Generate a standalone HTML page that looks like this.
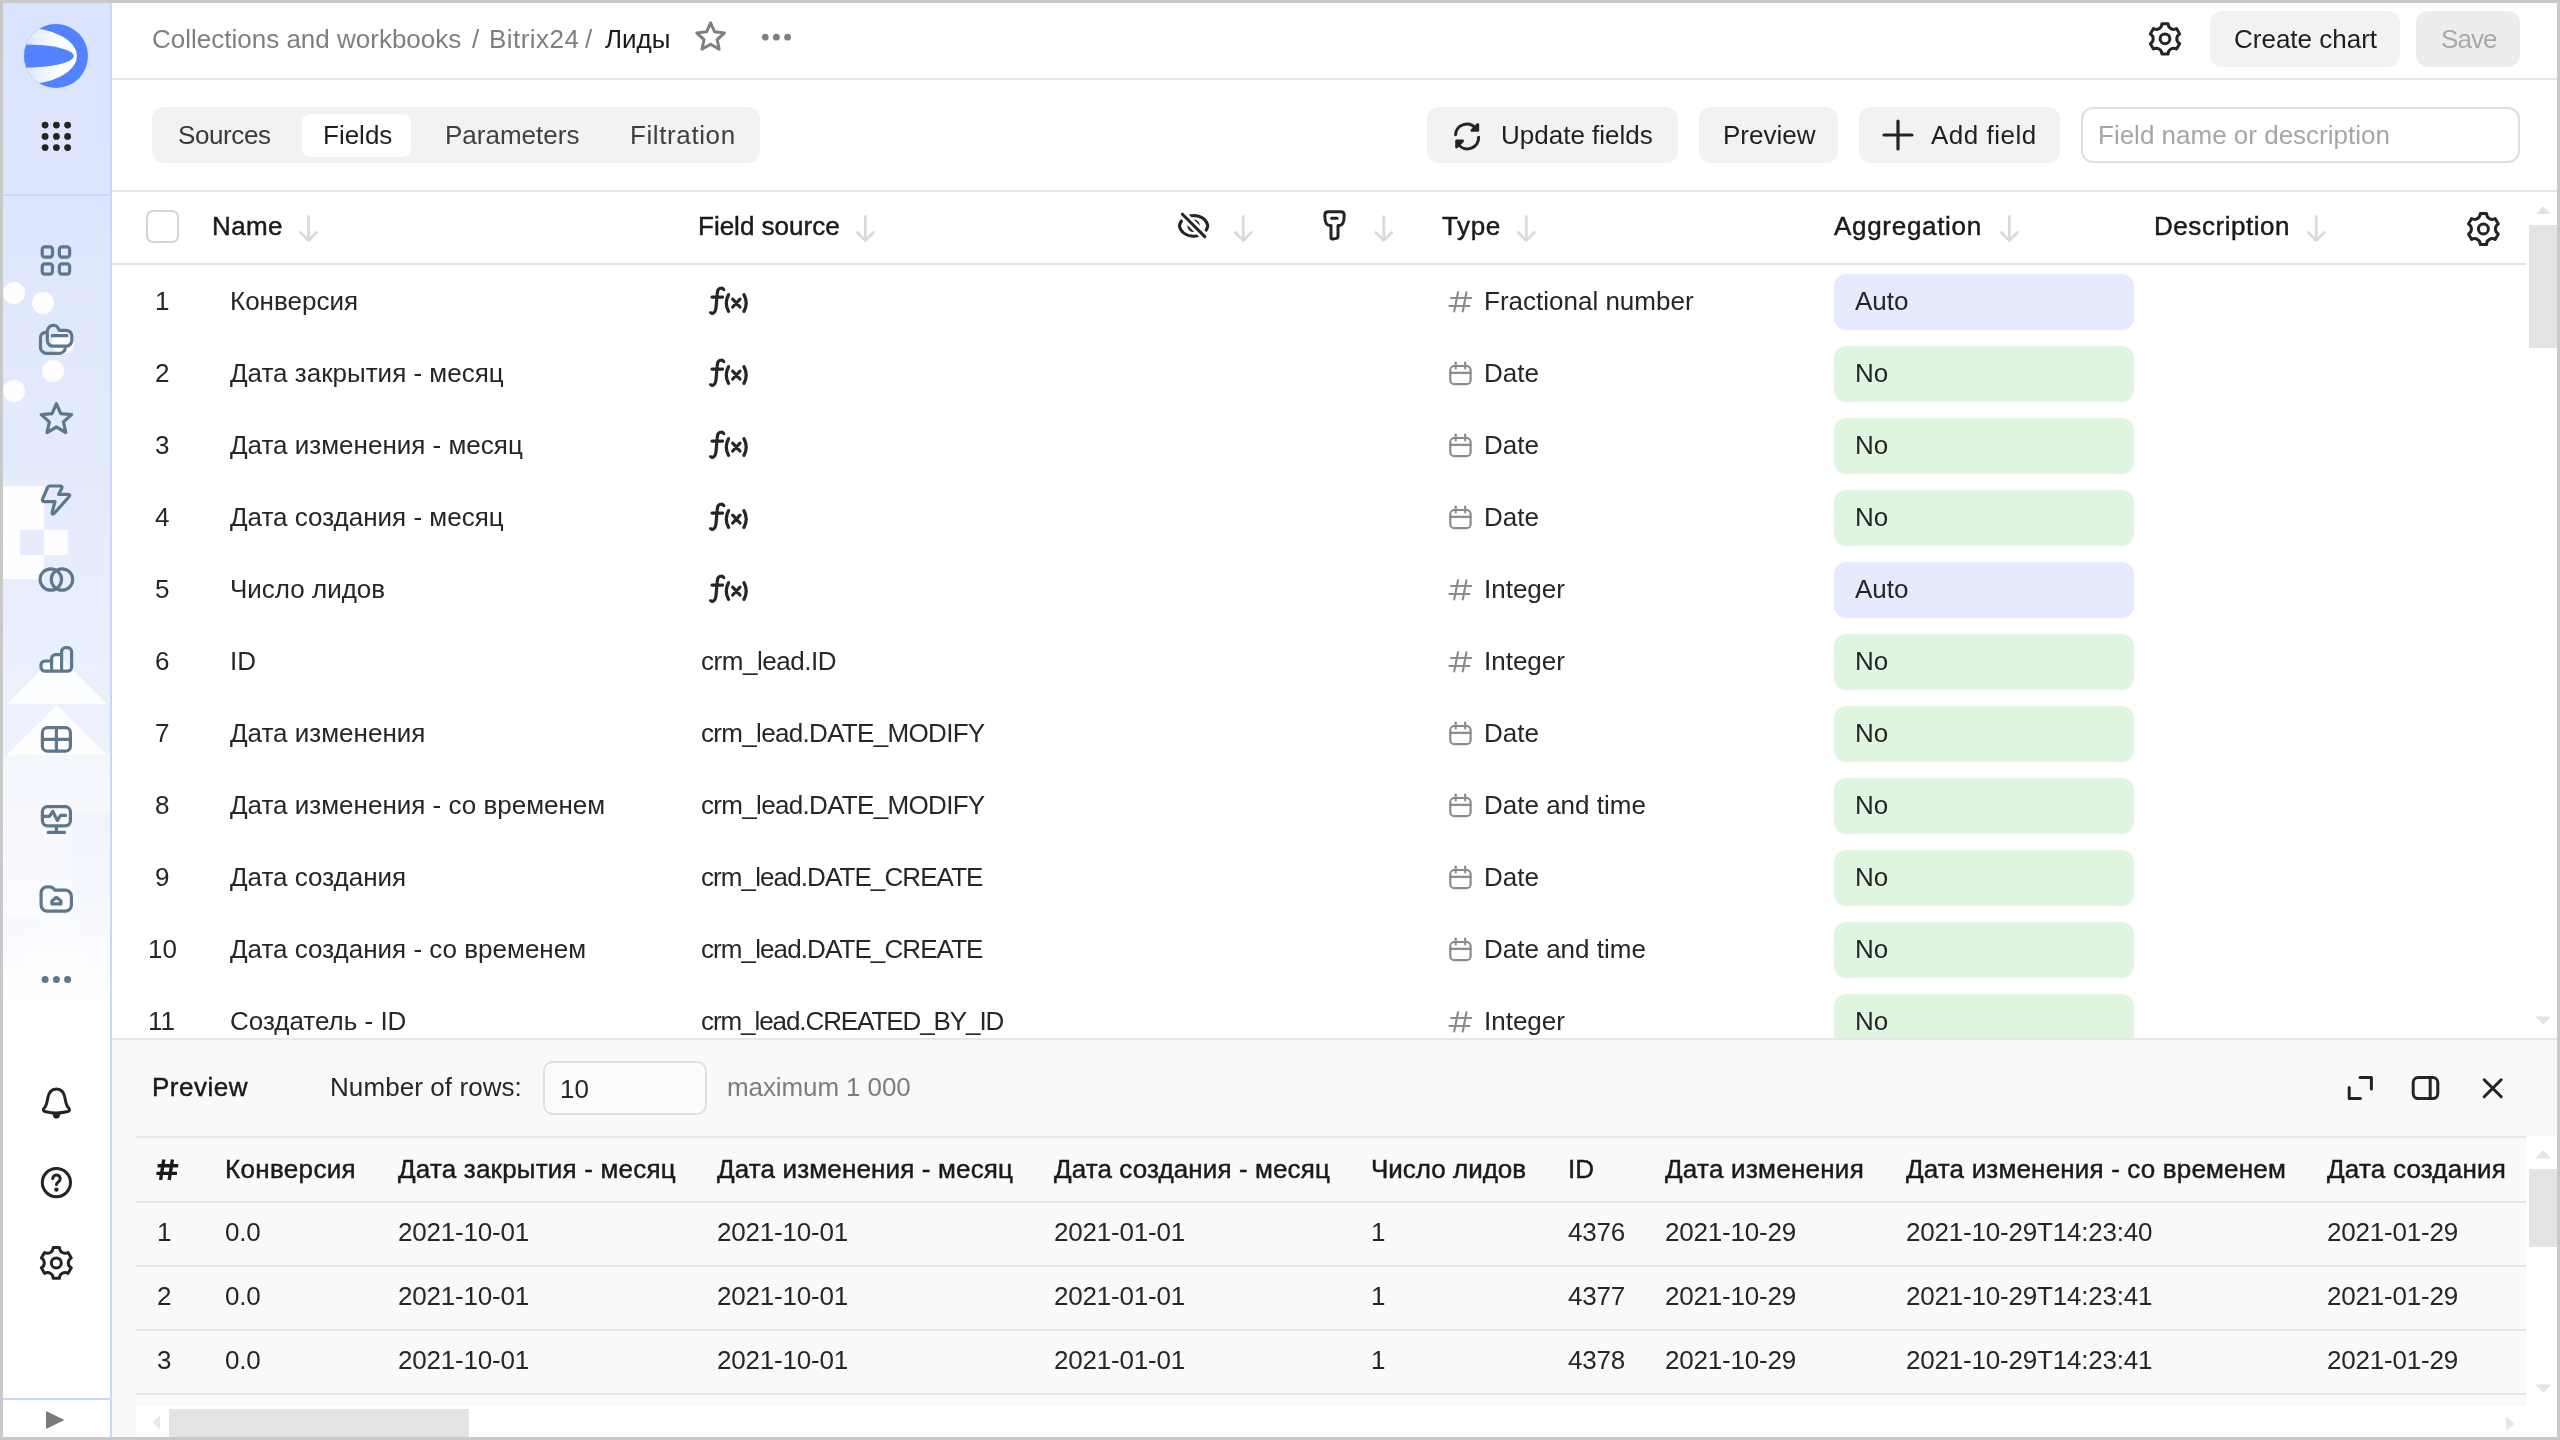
<!DOCTYPE html><html><head><meta charset="utf-8"><style>
*{box-sizing:border-box;margin:0;padding:0}
html,body{width:2560px;height:1440px;overflow:hidden;background:#c9c9c9;font-family:"Liberation Sans",sans-serif;color:#262626;-webkit-font-smoothing:antialiased}
.abs{position:absolute}
.t{position:absolute;white-space:nowrap;font-size:26px;line-height:30px;will-change:transform}
.b{font-weight:400;color:#1a1a1a;-webkit-text-stroke:0.45px #1a1a1a}
.g{color:#7f7f7f}
svg{position:absolute;overflow:visible}
</style></head><body>
<div class="abs" style="left:3px;top:3px;width:2554px;height:1434px;background:#fff;border-radius:0px;"></div>
<div class="abs" style="left:3px;top:3px;width:108px;height:1434px;background:linear-gradient(180deg,#dae4fe 0px,#dfe7fd 250px,#e6ecfd 520px,#eef2fd 760px,#f6f8fe 900px,#ffffff 1010px);border-radius:0px;"></div>
<svg style="left:0;top:0" width="2560" height="1440"><circle cx="14" cy="293" r="11" fill="#fff" opacity="0.95"/><circle cx="43" cy="303" r="11" fill="#fff" opacity="0.95"/><circle cx="53" cy="371" r="11" fill="#fff" opacity="0.95"/><circle cx="14" cy="391" r="11" fill="#fff" opacity="0.95"/><circle cx="63" cy="343" r="11" fill="#fff" opacity="0.95"/><rect x="3" y="486" width="41" height="93" fill="#fff" opacity="0.9"/><rect x="20" y="530" width="24" height="25" fill="#e6ecfd"/><rect x="44" y="530" width="24" height="25" fill="#fff" opacity="0.9"/><polygon points="7,704 107,704 57,654" fill="#fff" opacity="0.9"/><polygon points="7,755 107,755 57,705" fill="#fff" opacity="0.9"/><rect x="3" y="755" width="107" height="58" fill="#fff" opacity="0.4"/><rect x="3" y="813" width="69" height="104" fill="#fff" opacity="0.4"/><ellipse cx="56" cy="960" rx="34" ry="45" fill="#fff" opacity="0.3"/></svg>
<div class="abs" style="left:110px;top:3px;width:1.5px;height:1434px;background:#c9d7fb;border-radius:0px;"></div>
<div class="abs" style="left:3px;top:194px;width:107px;height:2px;background:#c9d7fb;border-radius:0px;"></div>
<div class="abs" style="left:3px;top:1398px;width:107px;height:2px;background:#c9d7fb;border-radius:0px;"></div>
<svg style="left:0;top:0" width="2560" height="1440"><defs><linearGradient id="lg" gradientUnits="userSpaceOnUse" x1="24" x2="60" y1="0" y2="0"><stop offset="0" stop-color="#dbe4fd"/><stop offset="1" stop-color="#ffffff"/></linearGradient>
<clipPath id="lc"><circle cx="56" cy="56" r="32"/></clipPath></defs>
<g clip-path="url(#lc)"><rect x="20" y="20" width="72" height="72" fill="#5282ff"/>
<ellipse cx="24" cy="56" rx="52.9" ry="28.3" fill="url(#lg)"/>
<ellipse cx="24" cy="56" rx="49.75" ry="11.6" fill="#5282ff"/></g><circle cx="45.1" cy="125.1" r="3.4" fill="#222426"/><circle cx="56.4" cy="125.1" r="3.4" fill="#222426"/><circle cx="67.6" cy="125.1" r="3.4" fill="#222426"/><circle cx="45.1" cy="136.4" r="3.4" fill="#222426"/><circle cx="56.4" cy="136.4" r="3.4" fill="#222426"/><circle cx="67.6" cy="136.4" r="3.4" fill="#222426"/><circle cx="45.1" cy="147.6" r="3.4" fill="#222426"/><circle cx="56.4" cy="147.6" r="3.4" fill="#222426"/><circle cx="67.6" cy="147.6" r="3.4" fill="#222426"/><rect x="42.2" y="246.8" width="10.3" height="10.3" rx="2.6" fill="none" stroke="#5f778a" stroke-width="3.2" stroke-linecap="round" stroke-linejoin="round"/><rect x="59.35" y="246.8" width="10.3" height="10.3" rx="2.6" fill="none" stroke="#5f778a" stroke-width="3.2" stroke-linecap="round" stroke-linejoin="round"/><rect x="42.2" y="263.9" width="10.3" height="10.3" rx="2.6" fill="none" stroke="#5f778a" stroke-width="3.2" stroke-linecap="round" stroke-linejoin="round"/><rect x="59.35" y="263.9" width="10.3" height="10.3" rx="2.6" fill="none" stroke="#5f778a" stroke-width="3.2" stroke-linecap="round" stroke-linejoin="round"/><path d="M53.3,325.4 H54 Q56.3,325.4 57.6,327.4 L59.3,330.3 H66 A5.8,5.8 0 0 1 71.8,336.1 V340.4 A5.8,5.8 0 0 1 66,346.2 H53.1 A5.8,5.8 0 0 1 47.3,340.4 V331.3 A5.9,5.9 0 0 1 53.3,325.4 Z M52.3,335.7 H67" fill="none" stroke="#5f778a" stroke-width="3.2" stroke-linecap="round" stroke-linejoin="round"/><path d="M45.3,332.4 A5.4,5.4 0 0 0 40.5,337.8 V347.4 A6,6 0 0 0 46.5,353.4 H59.3 A6,6 0 0 0 65.3,347.6" fill="none" stroke="#5f778a" stroke-width="3.2" stroke-linecap="round" stroke-linejoin="round"/><path d="M56.40,403.60 L60.75,413.61 L71.62,414.66 L63.44,421.89 L65.80,432.54 L56.40,427.00 L47.00,432.54 L49.36,421.89 L41.18,414.66 L52.05,413.61Z" fill="none" stroke="#5f778a" stroke-width="3.2" stroke-linecap="round" stroke-linejoin="round"/><path d="M49.8,486 H60.2 Q62.6,486 61.8,488.3 L58.6,494.3 H67.6 Q71,494.3 68.8,497 L54.6,513 Q51.6,515.6 52.2,512 L55,501.6 H44.6 Q41.8,501.6 42.6,499 L47.4,488 Q48.2,486 49.8,486 Z" fill="none" stroke="#5f778a" stroke-width="3.2" stroke-linecap="round" stroke-linejoin="round"/><circle cx="50.8" cy="579.5" r="10.7" fill="none" stroke="#5f778a" stroke-width="3.2" stroke-linecap="round" stroke-linejoin="round"/><circle cx="62" cy="579.5" r="10.7" fill="none" stroke="#5f778a" stroke-width="3.2" stroke-linecap="round" stroke-linejoin="round"/><path d="M41,667.2 V665 A4,4 0 0 1 45,661 H51.6 V658.6 A4,4 0 0 1 55.6,654.6 H61.6 V651.7 A4,4 0 0 1 65.6,647.7 H67.6 A4,4 0 0 1 71.6,651.7 V667.2 A4,4 0 0 1 67.6,671.2 H45 A4,4 0 0 1 41,667.2 Z M51.6,661 V671.2 M61.6,654.6 V671.2" fill="none" stroke="#5f778a" stroke-width="3.2" stroke-linecap="round" stroke-linejoin="round"/><rect x="42.4" y="727.7" width="28" height="23.5" rx="5" fill="none" stroke="#5f778a" stroke-width="3.2" stroke-linecap="round" stroke-linejoin="round"/><path d="M56.4,727.7 V751.2 M42.4,739.4 H70.4" fill="none" stroke="#5f778a" stroke-width="3.2" stroke-linecap="round" stroke-linejoin="round"/><rect x="42.4" y="806.6" width="28" height="19.2" rx="5" fill="none" stroke="#5f778a" stroke-width="3.2" stroke-linecap="round" stroke-linejoin="round"/><path d="M56.4,826 V832.4 M48.2,832.4 H64.6 M42.6,816.4 H49.4 L52.8,811.4 L57.4,820.4 L60.6,815.4 H65.6" fill="none" stroke="#5f778a" stroke-width="3.2" stroke-linecap="round" stroke-linejoin="round"/><path d="M47,886.8 H49 Q52,886.8 53.6,888.6 L55,890.2 H65.4 A6,6 0 0 1 71.4,896.2 V905.1 A6,6 0 0 1 65.4,911.1 H47.1 A6,6 0 0 1 41.1,905.1 V892.8 A6,6 0 0 1 47,886.8 Z M56.4,897.3 L60.9,901 V903.9 H51.9 V901 Z" fill="none" stroke="#5f778a" stroke-width="3.2" stroke-linecap="round" stroke-linejoin="round"/><circle cx="45.1" cy="979.6" r="3.5" fill="#5f778a"/><circle cx="56.4" cy="979.6" r="3.5" fill="#5f778a"/><circle cx="67.6" cy="979.6" r="3.5" fill="#5f778a"/><path d="M56.4,1089 C50.8,1089 48.6,1093.5 47.8,1098 C47,1103 46.6,1105.4 44.6,1107.6 C42.4,1110 43.2,1111.2 46,1111.8 C49.4,1112.6 53,1113 56.4,1113 C59.8,1113 63.4,1112.6 66.8,1111.8 C69.6,1111.2 70.4,1110 68.2,1107.6 C66.2,1105.4 65.8,1103 65,1098 C64.2,1093.5 62,1089 56.4,1089 Z" fill="none" stroke="#222426" stroke-width="3" stroke-linecap="round" stroke-linejoin="round"/><path d="M52.2,1113.6 H60.6 L59.2,1117.4 Q56.4,1119.8 53.6,1117.4 Z" fill="#222426"/><circle cx="56.4" cy="1182.6" r="14.1" fill="none" stroke="#222426" stroke-width="3" stroke-linecap="round" stroke-linejoin="round"/><path d="M52.8,1178.6 A3.7,3.7 0 1 1 59.2,1181.2 C57.8,1182.4 56.4,1183 56.4,1184.6" fill="none" stroke="#222426" stroke-width="3" stroke-linecap="round" stroke-linejoin="round"/><circle cx="56.4" cy="1189.6" r="2.2" fill="#222426"/><path d="M53.14,1247.50 L59.46,1247.50 C59.46,1251.99 64.17,1254.70 68.06,1252.46 L71.22,1257.94 C67.33,1260.18 67.33,1265.62 71.22,1267.86 L68.06,1273.34 C64.17,1271.10 59.46,1273.81 59.46,1278.30 L53.14,1278.30 C53.14,1273.81 48.43,1271.10 44.54,1273.34 L41.38,1267.86 C45.27,1265.62 45.27,1260.18 41.38,1257.94 L44.54,1252.46 C48.43,1254.70 53.14,1251.99 53.14,1247.50Z" fill="none" stroke="#222426" stroke-width="3.0" stroke-linejoin="round"/><circle cx="56.3" cy="1262.9" r="5.00" fill="none" stroke="#222426" stroke-width="3.0"/><path d="M46,1411 L64.5,1420 L46,1429 Z" fill="#7a7a7a"/></svg>
<div class="abs" style="left:112px;top:78px;width:2445px;height:2px;background:#e5e5e5;border-radius:0px;"></div>
<div class="t g" style="left:152px;top:24px;">Collections and workbooks</div>
<div class="t g" style="left:472px;top:24px;">/</div>
<div class="t g" style="left:489px;top:24px;letter-spacing:0.45px">Bitrix24</div>
<div class="t g" style="left:585px;top:24px;">/</div>
<div class="t " style="left:605px;top:24px;color:#1a1a1a">Лиды</div>
<div class="abs" style="left:2210px;top:11px;width:190px;height:56px;background:#f2f2f2;border-radius:12px;"></div>
<div class="t " style="left:2234px;top:24px;color:#1f1f1f">Create chart</div>
<div class="abs" style="left:2416px;top:11px;width:104px;height:56px;background:#ededed;border-radius:12px;"></div>
<div class="t " style="left:2441px;top:24px;color:#a9a9a9;letter-spacing:-0.9px">Save</div>
<div class="abs" style="left:112px;top:190px;width:2445px;height:2px;background:#e5e5e5;border-radius:0px;"></div>
<div class="abs" style="left:152px;top:107px;width:608px;height:56px;background:#f2f2f2;border-radius:12px;"></div>
<div class="abs" style="left:302px;top:114px;width:109px;height:43px;background:#ffffff;border-radius:8px;"></div>
<div class="t " style="left:178px;top:120px;color:#3a3a3a;letter-spacing:-0.4px">Sources</div>
<div class="t " style="left:323px;top:120px;color:#1f1f1f">Fields</div>
<div class="t " style="left:445px;top:120px;color:#404040">Parameters</div>
<div class="t " style="left:630px;top:120px;color:#404040;letter-spacing:0.6px">Filtration</div>
<div class="abs" style="left:1427px;top:107px;width:251px;height:56px;background:#f2f2f2;border-radius:12px;"></div>
<div class="t " style="left:1501px;top:120px;color:#1f1f1f">Update fields</div>
<div class="abs" style="left:1699px;top:107px;width:139px;height:56px;background:#f2f2f2;border-radius:12px;"></div>
<div class="t " style="left:1723px;top:120px;color:#1f1f1f">Preview</div>
<div class="abs" style="left:1859px;top:107px;width:201px;height:56px;background:#f2f2f2;border-radius:12px;"></div>
<div class="t " style="left:1931px;top:120px;color:#1f1f1f;letter-spacing:0.5px">Add field</div>
<div class="abs" style="left:2081px;top:107px;width:439px;height:56px;border:2px solid #dedede;border-radius:12px;background:#fff"></div>
<div class="t " style="left:2098px;top:120px;color:#a6a6a6">Field name or description</div>
<svg style="left:0;top:0" width="2560" height="1440"><path d="M710.60,22.80 L714.66,31.82 L724.49,32.89 L717.16,39.53 L719.18,49.21 L710.60,44.30 L702.02,49.21 L704.04,39.53 L696.71,32.89 L706.54,31.82Z" fill="none" stroke="#7f7f7f" stroke-width="3" stroke-linecap="round" stroke-linejoin="round"/><circle cx="765.2" cy="37.2" r="3.4" fill="#7f7f7f"/><circle cx="776.4" cy="37.2" r="3.4" fill="#7f7f7f"/><circle cx="787.6" cy="37.2" r="3.4" fill="#7f7f7f"/><path d="M2161.90,23.70 L2168.10,23.70 C2168.10,28.10 2172.72,30.77 2176.53,28.57 L2179.63,33.93 C2175.82,36.13 2175.82,41.47 2179.63,43.67 L2176.53,49.03 C2172.72,46.83 2168.10,49.50 2168.10,53.90 L2161.90,53.90 C2161.90,49.50 2157.28,46.83 2153.47,49.03 L2150.37,43.67 C2154.18,41.47 2154.18,36.13 2150.37,33.93 L2153.47,28.57 C2157.28,30.77 2161.90,28.10 2161.90,23.70Z" fill="none" stroke="#222426" stroke-width="3.0" stroke-linejoin="round"/><circle cx="2165" cy="38.8" r="4.90" fill="none" stroke="#222426" stroke-width="3.0"/><path d="M1455.6,134.8 A11.2,11.2 0 0 1 1475.6,128.4 M1478.6,137.2 A11.2,11.2 0 0 1 1458.6,144.6" fill="none" stroke="#222426" stroke-width="3" stroke-linecap="round" stroke-linejoin="round"/><path d="M1477.8,124.4 V130.4 H1471.8 Z M1456.6,147 V141 H1462.6 Z" fill="#222426" stroke="#222426" stroke-width="2.8" stroke-linejoin="round" stroke-linecap="round"/><path d="M1898,121 V149 M1884,135 H1912" fill="none" stroke="#222426" stroke-width="3.2" stroke-linecap="round"/></svg>
<div class="abs" style="left:112px;top:263px;width:2414px;height:2px;background:#e5e5e5;border-radius:0px;"></div>
<div class="abs" style="left:146px;top:210px;width:33px;height:33px;border:2px solid #d4d4d4;border-radius:7px;background:#fff"></div>
<div class="t b" style="left:212px;top:211px;letter-spacing:0.4px">Name</div>
<div class="t b" style="left:698px;top:211px;">Field source</div>
<div class="t b" style="left:1442px;top:211px;letter-spacing:0.6px">Type</div>
<div class="t b" style="left:1834px;top:211px;letter-spacing:0.7px">Aggregation</div>
<div class="t b" style="left:2154px;top:211px;letter-spacing:0.55px">Description</div>
<div class="abs" style="left:2529px;top:225px;width:28px;height:123px;background:#e3e3e3;border-radius:0px;"></div>
<div class="abs" style="left:112px;top:265px;width:2445px;height:773px;overflow:hidden">
<div class="abs" style="left:1722px;top:9px;width:300px;height:56px;background:#e5ebfd;border-radius:12px"></div>
<div class="t" style="left:1743px;top:21px;color:#262626">Auto</div>
<div class="t" style="left:42.80000000000001px;top:21px;color:#262626">1</div>
<div class="t" style="left:118px;top:21px;color:#262626">Конверсия</div>
<div class="t" style="left:1372px;top:21px;color:#262626">Fractional number</div>
<div class="abs" style="left:1722px;top:81px;width:300px;height:56px;background:#e0f6e1;border-radius:12px"></div>
<div class="t" style="left:1743px;top:93px;color:#262626">No</div>
<div class="t" style="left:42.80000000000001px;top:93px;color:#262626">2</div>
<div class="t" style="left:118px;top:93px;color:#262626">Дата закрытия - месяц</div>
<div class="t" style="left:1372px;top:93px;color:#262626">Date</div>
<div class="abs" style="left:1722px;top:153px;width:300px;height:56px;background:#e0f6e1;border-radius:12px"></div>
<div class="t" style="left:1743px;top:165px;color:#262626">No</div>
<div class="t" style="left:42.80000000000001px;top:165px;color:#262626">3</div>
<div class="t" style="left:118px;top:165px;color:#262626">Дата изменения - месяц</div>
<div class="t" style="left:1372px;top:165px;color:#262626">Date</div>
<div class="abs" style="left:1722px;top:225px;width:300px;height:56px;background:#e0f6e1;border-radius:12px"></div>
<div class="t" style="left:1743px;top:237px;color:#262626">No</div>
<div class="t" style="left:42.80000000000001px;top:237px;color:#262626">4</div>
<div class="t" style="left:118px;top:237px;color:#262626">Дата создания - месяц</div>
<div class="t" style="left:1372px;top:237px;color:#262626">Date</div>
<div class="abs" style="left:1722px;top:297px;width:300px;height:56px;background:#e5ebfd;border-radius:12px"></div>
<div class="t" style="left:1743px;top:309px;color:#262626">Auto</div>
<div class="t" style="left:42.80000000000001px;top:309px;color:#262626">5</div>
<div class="t" style="left:118px;top:309px;color:#262626">Число лидов</div>
<div class="t" style="left:1372px;top:309px;color:#262626">Integer</div>
<div class="abs" style="left:1722px;top:369px;width:300px;height:56px;background:#e0f6e1;border-radius:12px"></div>
<div class="t" style="left:1743px;top:381px;color:#262626">No</div>
<div class="t" style="left:42.80000000000001px;top:381px;color:#262626">6</div>
<div class="t" style="left:118px;top:381px;color:#262626">ID</div>
<div class="t" style="left:589px;top:381px;color:#262626;letter-spacing:-0.47px">crm_lead.ID</div>
<div class="t" style="left:1372px;top:381px;color:#262626">Integer</div>
<div class="abs" style="left:1722px;top:441px;width:300px;height:56px;background:#e0f6e1;border-radius:12px"></div>
<div class="t" style="left:1743px;top:453px;color:#262626">No</div>
<div class="t" style="left:42.80000000000001px;top:453px;color:#262626">7</div>
<div class="t" style="left:118px;top:453px;color:#262626">Дата изменения</div>
<div class="t" style="left:589px;top:453px;color:#262626;letter-spacing:-0.68px">crm_lead.DATE_MODIFY</div>
<div class="t" style="left:1372px;top:453px;color:#262626">Date</div>
<div class="abs" style="left:1722px;top:513px;width:300px;height:56px;background:#e0f6e1;border-radius:12px"></div>
<div class="t" style="left:1743px;top:525px;color:#262626">No</div>
<div class="t" style="left:42.80000000000001px;top:525px;color:#262626">8</div>
<div class="t" style="left:118px;top:525px;color:#262626">Дата изменения - со временем</div>
<div class="t" style="left:589px;top:525px;color:#262626;letter-spacing:-0.68px">crm_lead.DATE_MODIFY</div>
<div class="t" style="left:1372px;top:525px;color:#262626">Date and time</div>
<div class="abs" style="left:1722px;top:585px;width:300px;height:56px;background:#e0f6e1;border-radius:12px"></div>
<div class="t" style="left:1743px;top:597px;color:#262626">No</div>
<div class="t" style="left:42.80000000000001px;top:597px;color:#262626">9</div>
<div class="t" style="left:118px;top:597px;color:#262626">Дата создания</div>
<div class="t" style="left:589px;top:597px;color:#262626;letter-spacing:-0.9px">crm_lead.DATE_CREATE</div>
<div class="t" style="left:1372px;top:597px;color:#262626">Date</div>
<div class="abs" style="left:1722px;top:657px;width:300px;height:56px;background:#e0f6e1;border-radius:12px"></div>
<div class="t" style="left:1743px;top:669px;color:#262626">No</div>
<div class="t" style="left:35.599999999999994px;top:669px;color:#262626">10</div>
<div class="t" style="left:118px;top:669px;color:#262626">Дата создания - со временем</div>
<div class="t" style="left:589px;top:669px;color:#262626;letter-spacing:-0.9px">crm_lead.DATE_CREATE</div>
<div class="t" style="left:1372px;top:669px;color:#262626">Date and time</div>
<div class="abs" style="left:1722px;top:729px;width:300px;height:56px;background:#e0f6e1;border-radius:12px"></div>
<div class="t" style="left:1743px;top:741px;color:#262626">No</div>
<div class="t" style="left:35.599999999999994px;top:741px;color:#262626">11</div>
<div class="t" style="left:118px;top:741px;color:#262626">Создатель - ID</div>
<div class="t" style="left:589px;top:741px;color:#262626;letter-spacing:-1.08px">crm_lead.CREATED_BY_ID</div>
<div class="t" style="left:1372px;top:741px;color:#262626">Integer</div>
</div>
<svg style="left:0;top:0" width="2560" height="1440"><defs><clipPath id="tc"><rect x="112" y="265" width="2445" height="773"/></clipPath></defs><g clip-path="url(#tc)"><path d="M723.8,289.6 C722.6,287.8 719,287.4 717.8,290.6 C716.9,293 716.6,303 715.9,308.4 C715.4,312.4 712.6,314.4 710.6,312.6 M712,297.1 H722.6 M728.6,294.6 C725.6,300 725.6,306 728.6,311.4 M732.7,299.2 L740,307 M740,299.2 L732.7,307 M743.9,294.6 C746.9,300 746.9,306 743.9,311.4" transform="translate(0,0)" fill="none" stroke="#262626" stroke-width="3.2" stroke-linecap="round" stroke-linejoin="round"/><path d="M1458,292.4 L1454.2,311.4 M1466.4,292.4 L1462.8,311.4 M1451.2,298 H1471.2 M1449.4,306 H1469.4" transform="translate(0,0)" fill="none" stroke="#8c8c8c" stroke-width="2.2" stroke-linecap="round" stroke-linejoin="round"/><path d="M723.8,289.6 C722.6,287.8 719,287.4 717.8,290.6 C716.9,293 716.6,303 715.9,308.4 C715.4,312.4 712.6,314.4 710.6,312.6 M712,297.1 H722.6 M728.6,294.6 C725.6,300 725.6,306 728.6,311.4 M732.7,299.2 L740,307 M740,299.2 L732.7,307 M743.9,294.6 C746.9,300 746.9,306 743.9,311.4" transform="translate(0,72)" fill="none" stroke="#262626" stroke-width="3.2" stroke-linecap="round" stroke-linejoin="round"/><rect x="1450.3" y="294" width="20.3" height="18.2" rx="4" transform="translate(0,72)" fill="none" stroke="#8c8c8c" stroke-width="2.2" stroke-linecap="round" stroke-linejoin="round"/><path d="M1450.3,300.9 H1470.6 M1455.7,290.6 V296.4 M1465.2,290.6 V296.4" transform="translate(0,72)" fill="none" stroke="#8c8c8c" stroke-width="2.2" stroke-linecap="round" stroke-linejoin="round"/><path d="M723.8,289.6 C722.6,287.8 719,287.4 717.8,290.6 C716.9,293 716.6,303 715.9,308.4 C715.4,312.4 712.6,314.4 710.6,312.6 M712,297.1 H722.6 M728.6,294.6 C725.6,300 725.6,306 728.6,311.4 M732.7,299.2 L740,307 M740,299.2 L732.7,307 M743.9,294.6 C746.9,300 746.9,306 743.9,311.4" transform="translate(0,144)" fill="none" stroke="#262626" stroke-width="3.2" stroke-linecap="round" stroke-linejoin="round"/><rect x="1450.3" y="294" width="20.3" height="18.2" rx="4" transform="translate(0,144)" fill="none" stroke="#8c8c8c" stroke-width="2.2" stroke-linecap="round" stroke-linejoin="round"/><path d="M1450.3,300.9 H1470.6 M1455.7,290.6 V296.4 M1465.2,290.6 V296.4" transform="translate(0,144)" fill="none" stroke="#8c8c8c" stroke-width="2.2" stroke-linecap="round" stroke-linejoin="round"/><path d="M723.8,289.6 C722.6,287.8 719,287.4 717.8,290.6 C716.9,293 716.6,303 715.9,308.4 C715.4,312.4 712.6,314.4 710.6,312.6 M712,297.1 H722.6 M728.6,294.6 C725.6,300 725.6,306 728.6,311.4 M732.7,299.2 L740,307 M740,299.2 L732.7,307 M743.9,294.6 C746.9,300 746.9,306 743.9,311.4" transform="translate(0,216)" fill="none" stroke="#262626" stroke-width="3.2" stroke-linecap="round" stroke-linejoin="round"/><rect x="1450.3" y="294" width="20.3" height="18.2" rx="4" transform="translate(0,216)" fill="none" stroke="#8c8c8c" stroke-width="2.2" stroke-linecap="round" stroke-linejoin="round"/><path d="M1450.3,300.9 H1470.6 M1455.7,290.6 V296.4 M1465.2,290.6 V296.4" transform="translate(0,216)" fill="none" stroke="#8c8c8c" stroke-width="2.2" stroke-linecap="round" stroke-linejoin="round"/><path d="M723.8,289.6 C722.6,287.8 719,287.4 717.8,290.6 C716.9,293 716.6,303 715.9,308.4 C715.4,312.4 712.6,314.4 710.6,312.6 M712,297.1 H722.6 M728.6,294.6 C725.6,300 725.6,306 728.6,311.4 M732.7,299.2 L740,307 M740,299.2 L732.7,307 M743.9,294.6 C746.9,300 746.9,306 743.9,311.4" transform="translate(0,288)" fill="none" stroke="#262626" stroke-width="3.2" stroke-linecap="round" stroke-linejoin="round"/><path d="M1458,292.4 L1454.2,311.4 M1466.4,292.4 L1462.8,311.4 M1451.2,298 H1471.2 M1449.4,306 H1469.4" transform="translate(0,288)" fill="none" stroke="#8c8c8c" stroke-width="2.2" stroke-linecap="round" stroke-linejoin="round"/><path d="M1458,292.4 L1454.2,311.4 M1466.4,292.4 L1462.8,311.4 M1451.2,298 H1471.2 M1449.4,306 H1469.4" transform="translate(0,360)" fill="none" stroke="#8c8c8c" stroke-width="2.2" stroke-linecap="round" stroke-linejoin="round"/><rect x="1450.3" y="294" width="20.3" height="18.2" rx="4" transform="translate(0,432)" fill="none" stroke="#8c8c8c" stroke-width="2.2" stroke-linecap="round" stroke-linejoin="round"/><path d="M1450.3,300.9 H1470.6 M1455.7,290.6 V296.4 M1465.2,290.6 V296.4" transform="translate(0,432)" fill="none" stroke="#8c8c8c" stroke-width="2.2" stroke-linecap="round" stroke-linejoin="round"/><rect x="1450.3" y="294" width="20.3" height="18.2" rx="4" transform="translate(0,504)" fill="none" stroke="#8c8c8c" stroke-width="2.2" stroke-linecap="round" stroke-linejoin="round"/><path d="M1450.3,300.9 H1470.6 M1455.7,290.6 V296.4 M1465.2,290.6 V296.4" transform="translate(0,504)" fill="none" stroke="#8c8c8c" stroke-width="2.2" stroke-linecap="round" stroke-linejoin="round"/><rect x="1450.3" y="294" width="20.3" height="18.2" rx="4" transform="translate(0,576)" fill="none" stroke="#8c8c8c" stroke-width="2.2" stroke-linecap="round" stroke-linejoin="round"/><path d="M1450.3,300.9 H1470.6 M1455.7,290.6 V296.4 M1465.2,290.6 V296.4" transform="translate(0,576)" fill="none" stroke="#8c8c8c" stroke-width="2.2" stroke-linecap="round" stroke-linejoin="round"/><rect x="1450.3" y="294" width="20.3" height="18.2" rx="4" transform="translate(0,648)" fill="none" stroke="#8c8c8c" stroke-width="2.2" stroke-linecap="round" stroke-linejoin="round"/><path d="M1450.3,300.9 H1470.6 M1455.7,290.6 V296.4 M1465.2,290.6 V296.4" transform="translate(0,648)" fill="none" stroke="#8c8c8c" stroke-width="2.2" stroke-linecap="round" stroke-linejoin="round"/><path d="M1458,292.4 L1454.2,311.4 M1466.4,292.4 L1462.8,311.4 M1451.2,298 H1471.2 M1449.4,306 H1469.4" transform="translate(0,720)" fill="none" stroke="#8c8c8c" stroke-width="2.2" stroke-linecap="round" stroke-linejoin="round"/></g><path d="M308.5,216.6 V240.4 M300.5,232.6 L308.5,240.6 L316.5,232.6" fill="none" stroke="#dadada" stroke-width="2.8" stroke-linecap="round" stroke-linejoin="round"/><path d="M865.3,216.6 V240.4 M857.3,232.6 L865.3,240.6 L873.3,232.6" fill="none" stroke="#dadada" stroke-width="2.8" stroke-linecap="round" stroke-linejoin="round"/><path d="M1243.3,216.6 V240.4 M1235.3,232.6 L1243.3,240.6 L1251.3,232.6" fill="none" stroke="#dadada" stroke-width="2.8" stroke-linecap="round" stroke-linejoin="round"/><path d="M1383.8,216.6 V240.4 M1375.8,232.6 L1383.8,240.6 L1391.8,232.6" fill="none" stroke="#dadada" stroke-width="2.8" stroke-linecap="round" stroke-linejoin="round"/><path d="M1526.3,216.6 V240.4 M1518.3,232.6 L1526.3,240.6 L1534.3,232.6" fill="none" stroke="#dadada" stroke-width="2.8" stroke-linecap="round" stroke-linejoin="round"/><path d="M2009.3,216.6 V240.4 M2001.3,232.6 L2009.3,240.6 L2017.3,232.6" fill="none" stroke="#dadada" stroke-width="2.8" stroke-linecap="round" stroke-linejoin="round"/><path d="M2316.3,216.6 V240.4 M2308.3,232.6 L2316.3,240.6 L2324.3,232.6" fill="none" stroke="#dadada" stroke-width="2.8" stroke-linecap="round" stroke-linejoin="round"/><path d="M1179.4,225.8 C1180.4,219.4 1186.4,215.4 1193.6,215.4 C1200.8,215.4 1206.8,219.4 1207.8,225.8 C1206.8,232.2 1200.8,236.2 1193.6,236.2 C1186.4,236.2 1180.4,232.2 1179.4,225.8 Z" fill="none" stroke="#222426" stroke-width="3"/><circle cx="1193.6" cy="225.8" r="4.8" fill="none" stroke="#222426" stroke-width="3"/><path d="M1182.4,214.2 L1204.8,236.6" fill="none" stroke="#ffffff" stroke-width="8.5" stroke-linecap="round"/><path d="M1182.4,214.2 L1204.8,236.6" fill="none" stroke="#222426" stroke-width="3" stroke-linecap="round" stroke-linejoin="round"/><path d="M1328.2,211.8 H1340.8 Q1344.2,211.8 1344.2,215.2 Q1344.2,225.4 1339.4,225.4 H1338 V236.2 Q1338,238 1336.2,238.4 L1333,239 Q1331,239.3 1331,237.5 V225.4 H1329.6 Q1324.8,225.4 1324.8,215.2 Q1324.8,211.8 1328.2,211.8 Z M1331.6,218.2 H1337.2" fill="none" stroke="#222426" stroke-width="3" stroke-linecap="round" stroke-linejoin="round"/><path d="M2480.24,213.60 L2486.56,213.60 C2486.56,218.09 2491.27,220.80 2495.16,218.56 L2498.32,224.04 C2494.43,226.28 2494.43,231.72 2498.32,233.96 L2495.16,239.44 C2491.27,237.20 2486.56,239.91 2486.56,244.40 L2480.24,244.40 C2480.24,239.91 2475.53,237.20 2471.64,239.44 L2468.48,233.96 C2472.37,231.72 2472.37,226.28 2468.48,224.04 L2471.64,218.56 C2475.53,220.80 2480.24,218.09 2480.24,213.60Z" fill="none" stroke="#222426" stroke-width="3.0" stroke-linejoin="round"/><circle cx="2483.4" cy="229" r="5.00" fill="none" stroke="#222426" stroke-width="3.0"/><path d="M2536,214 L2543.3,206 L2550.6,214 Z" fill="#e3e3e3"/><path d="M2535.8,1016.4 L2550.8,1016.4 L2543.3,1024.7 Z" fill="#e3e3e3"/></svg>
<div class="abs" style="left:112px;top:1040px;width:2445px;height:397px;background:#f9f9f9;border-radius:0px;"></div>
<div class="abs" style="left:112px;top:1038px;width:2445px;height:2px;background:#e6e6e6;border-radius:0px;"></div>
<div class="t b" style="left:152px;top:1072px;letter-spacing:0.5px">Preview</div>
<div class="t " style="left:330px;top:1072px;color:#262626;letter-spacing:0.08px">Number of rows:</div>
<div class="abs" style="left:543px;top:1061px;width:164px;height:54px;border:2px solid #e0e0e0;border-radius:10px;background:#fbfbfb"></div>
<div class="t " style="left:560px;top:1074px;color:#262626">10</div>
<div class="t " style="left:727px;top:1072px;color:#7d7d7d;letter-spacing:-0.1px">maximum 1 000</div>
<div class="abs" style="left:136px;top:1136px;width:2390px;height:270px;background:#f9f9f9;border-radius:0px;"></div>
<div class="abs" style="left:136px;top:1136px;width:2390px;height:2px;background:#e6e6e6;border-radius:0px;"></div>
<div class="abs" style="left:136px;top:1201px;width:2390px;height:2px;background:#e6e6e6;border-radius:0px;"></div>
<div class="abs" style="left:136px;top:1265px;width:2390px;height:2px;background:#e6e6e6;border-radius:0px;"></div>
<div class="abs" style="left:136px;top:1329px;width:2390px;height:2px;background:#e6e6e6;border-radius:0px;"></div>
<div class="abs" style="left:136px;top:1393px;width:2390px;height:2px;background:#e6e6e6;border-radius:0px;"></div>
<div class="t " style="left:157px;top:1217px;color:#262626;letter-spacing:-0.2px">1</div>
<div class="t " style="left:157px;top:1281px;color:#262626;letter-spacing:-0.2px">2</div>
<div class="t " style="left:157px;top:1345px;color:#262626;letter-spacing:-0.2px">3</div>
<div class="t b" style="left:225px;top:1154px;letter-spacing:0.33px">Конверсия</div>
<div class="t " style="left:225px;top:1217px;color:#262626;letter-spacing:-0.2px">0.0</div>
<div class="t " style="left:225px;top:1281px;color:#262626;letter-spacing:-0.2px">0.0</div>
<div class="t " style="left:225px;top:1345px;color:#262626;letter-spacing:-0.2px">0.0</div>
<div class="t b" style="left:398px;top:1154px;letter-spacing:0.2px">Дата закрытия - месяц</div>
<div class="t " style="left:398px;top:1217px;color:#262626;letter-spacing:-0.2px">2021-10-01</div>
<div class="t " style="left:398px;top:1281px;color:#262626;letter-spacing:-0.2px">2021-10-01</div>
<div class="t " style="left:398px;top:1345px;color:#262626;letter-spacing:-0.2px">2021-10-01</div>
<div class="t b" style="left:717px;top:1154px;letter-spacing:0.15px">Дата изменения - месяц</div>
<div class="t " style="left:717px;top:1217px;color:#262626;letter-spacing:-0.2px">2021-10-01</div>
<div class="t " style="left:717px;top:1281px;color:#262626;letter-spacing:-0.2px">2021-10-01</div>
<div class="t " style="left:717px;top:1345px;color:#262626;letter-spacing:-0.2px">2021-10-01</div>
<div class="t b" style="left:1054px;top:1154px;letter-spacing:0.11px">Дата создания - месяц</div>
<div class="t " style="left:1054px;top:1217px;color:#262626;letter-spacing:-0.2px">2021-01-01</div>
<div class="t " style="left:1054px;top:1281px;color:#262626;letter-spacing:-0.2px">2021-01-01</div>
<div class="t " style="left:1054px;top:1345px;color:#262626;letter-spacing:-0.2px">2021-01-01</div>
<div class="t b" style="left:1371px;top:1154px;letter-spacing:0px">Число лидов</div>
<div class="t " style="left:1371px;top:1217px;color:#262626;letter-spacing:-0.2px">1</div>
<div class="t " style="left:1371px;top:1281px;color:#262626;letter-spacing:-0.2px">1</div>
<div class="t " style="left:1371px;top:1345px;color:#262626;letter-spacing:-0.2px">1</div>
<div class="t b" style="left:1568px;top:1154px;letter-spacing:0px">ID</div>
<div class="t " style="left:1568px;top:1217px;color:#262626;letter-spacing:-0.2px">4376</div>
<div class="t " style="left:1568px;top:1281px;color:#262626;letter-spacing:-0.2px">4377</div>
<div class="t " style="left:1568px;top:1345px;color:#262626;letter-spacing:-0.2px">4378</div>
<div class="t b" style="left:1665px;top:1154px;letter-spacing:0.26px">Дата изменения</div>
<div class="t " style="left:1665px;top:1217px;color:#262626;letter-spacing:-0.2px">2021-10-29</div>
<div class="t " style="left:1665px;top:1281px;color:#262626;letter-spacing:-0.2px">2021-10-29</div>
<div class="t " style="left:1665px;top:1345px;color:#262626;letter-spacing:-0.2px">2021-10-29</div>
<div class="t b" style="left:1906px;top:1154px;letter-spacing:0.17px">Дата изменения - со временем</div>
<div class="t " style="left:1906px;top:1217px;color:#262626;letter-spacing:-0.2px">2021-10-29T14:23:40</div>
<div class="t " style="left:1906px;top:1281px;color:#262626;letter-spacing:-0.2px">2021-10-29T14:23:41</div>
<div class="t " style="left:1906px;top:1345px;color:#262626;letter-spacing:-0.2px">2021-10-29T14:23:41</div>
<div class="t b" style="left:2327px;top:1154px;letter-spacing:0.22px">Дата создания</div>
<div class="t " style="left:2327px;top:1217px;color:#262626;letter-spacing:-0.2px">2021-01-29</div>
<div class="t " style="left:2327px;top:1281px;color:#262626;letter-spacing:-0.2px">2021-01-29</div>
<div class="t " style="left:2327px;top:1345px;color:#262626;letter-spacing:-0.2px">2021-01-29</div>
<div class="abs" style="left:136px;top:1406px;width:2421px;height:31px;background:#ffffff;border-radius:0px;"></div>
<div class="abs" style="left:2526px;top:1136px;width:31px;height:270px;background:#ffffff;border-radius:0px;"></div>
<div class="abs" style="left:169px;top:1409px;width:300px;height:28px;background:#e3e3e3;border-radius:0px;"></div>
<div class="abs" style="left:2529px;top:1169px;width:28px;height:78px;background:#e3e3e3;border-radius:0px;"></div>
<svg style="left:0;top:0" width="2560" height="1440"><path d="M2360,1077.6 H2371.4 V1089 M2349.2,1087.4 V1098.6 H2360.4" fill="none" stroke="#222426" stroke-width="3" stroke-linecap="round" stroke-linejoin="round"/><rect x="2413.2" y="1077.6" width="24.6" height="21" rx="5" fill="none" stroke="#222426" stroke-width="3" stroke-linecap="round" stroke-linejoin="round"/><path d="M2430.2,1077.6 V1098.6" fill="none" stroke="#222426" stroke-width="3" stroke-linecap="round" stroke-linejoin="round"/><path d="M2484.2,1079.8 L2501.2,1096.8 M2501.2,1079.8 L2484.2,1096.8" fill="none" stroke="#222426" stroke-width="3" stroke-linecap="round" stroke-linejoin="round"/><path d="M163.8,1159.6 L160.6,1180 M172.4,1159.6 L169.2,1180 M157.6,1165.8 H178.2 M156.4,1173.4 H177" fill="none" stroke="#1a1a1a" stroke-width="3.4" stroke-linecap="butt"/><path d="M160,1415.4 L152.4,1422.6 L160,1429.8 Z" fill="#e8e8e8"/><path d="M2506.2,1416.6 L2514.4,1423.8 L2506.2,1431 Z" fill="#e4e4e4"/><path d="M2535.5,1158.2 L2543.3,1150 L2551,1158.2 Z" fill="#e3e3e3"/><path d="M2535.5,1384.4 L2551,1384.4 L2543.3,1392.9 Z" fill="#e3e3e3"/></svg>
</body></html>
